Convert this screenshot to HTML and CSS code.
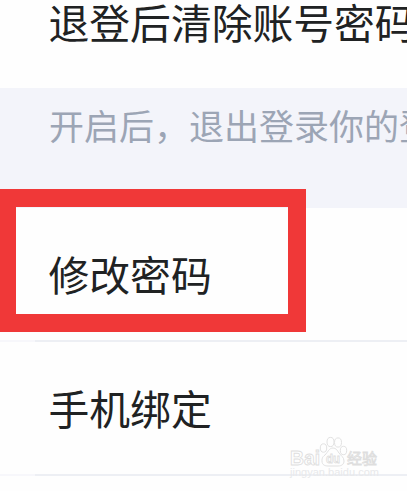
FILE: index.html
```
<!DOCTYPE html>
<html lang="zh-CN">
<head>
  <meta charset="UTF-8" />
  <meta name="viewport" content="width=device-width, initial-scale=1" />
  <title>账号安全</title>
  <link rel="stylesheet" href="styles.css">
</head>
<body>
  <!-- settings list -->
  <div class="settings">
    <div class="item first">退登后清除账号密码</div>
    <div class="tip">开启后，退出登录你的登</div>
    <div class="item line">修改密码</div>
    <div class="item line">手机绑定</div>
    <!-- red highlight box -->
    <div class="highlight"></div>
  </div>

  <!-- watermark -->
  <svg class="watermark" viewBox="0 0 96 46" width="96" height="46">
    <g class="mark">
      <text class="brand" x="3" y="30" textLength="30" lengthAdjust="spacingAndGlyphs">Bai</text>
      <ellipse cx="36.5" cy="13" rx="3.2" ry="4.2" />
      <ellipse cx="43.5" cy="7" rx="3.5" ry="4.6" />
      <ellipse cx="51" cy="7.5" rx="3.5" ry="4.6" />
      <ellipse cx="56.5" cy="15.5" rx="3.2" ry="4.2" />
      <path d="M46 13c-4 0-5 4-8 7-3 2-3 4-3 6 0 4 3 5 6 5h10c4 0 6-2 6-5 0-4-3-5-5-8-2-3-3-5-6-5z" />
      <text class="du" x="39" y="28" textLength="14" lengthAdjust="spacingAndGlyphs">du</text>
      <text class="cn" x="60" y="29" textLength="30">经验</text>
    </g>
    <text class="url" x="3" y="41" textLength="89" lengthAdjust="spacingAndGlyphs">jingyan.baidu.com</text>
  </svg>
</body>
</html>
```
FILE: styles.css
```
body {
  margin: 0;
  height: 491px;
  overflow: hidden;
  background-color: #fefefe;
  color: #202223;
  font-family: "Noto Sans CJK SC", sans-serif;
}

/* settings list, flow-root keeps the first row's negative margin inside */
.settings {
  display: flow-root;
  position: relative;
  overflow: hidden;
}

.item {
  display: flex;
  align-items: center;
  box-sizing: border-box;
  height: 134px;
  padding: 0 0 1px 48.5px;
  font-size: 40.8px;
  line-height: 60px;
  white-space: nowrap;
}

/* first row is scrolled half out of view */
.first {
  height: 96px;
  align-items: flex-start;
  margin-top: -8px;
}

.line {
  border-bottom: 2px solid;
  border-image: linear-gradient(to right, #f7f7fb 36px, #edeff4 36px) 1;
}

.tip {
  height: 120px;
  padding: 11px 0 0 49px;
  box-sizing: border-box;
  background-color: #f3f4fa;
  color: #9ca5b5;
  font-size: 35px;
  line-height: 52px;
  white-space: nowrap;
}

/* red highlight box */
.highlight {
  position: absolute;
  top: 189px;
  left: 0;
  width: 306px;
  height: 143px;
  box-sizing: border-box;
  border: 18px solid #f03838;
  border-left-width: 16px;
}

/* watermark */
.watermark {
  position: absolute;
  left: 287px;
  top: 435px;
}

.mark {
  fill: #fefefe;
  stroke: #dedede;
  stroke-width: 0.9;
}

.brand,
.du {
  font-family: "Liberation Sans", sans-serif;
  font-weight: bold;
}

.brand {
  font-size: 20px;
}

.du {
  font-size: 13px;
}

.cn {
  font-size: 15px;
}

.url {
  font-family: "Liberation Sans", sans-serif;
  font-size: 10px;
  fill: #e8e9eb;
}
```
